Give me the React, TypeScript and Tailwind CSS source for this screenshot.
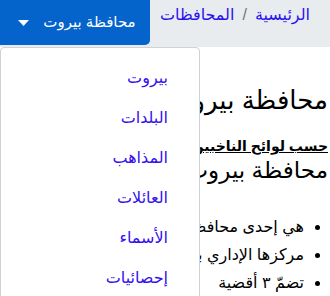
import React from "react";

const font = { fontFamily: '"Liberation Sans", "DejaVu Sans", sans-serif' };

const menuItems = ["بيروت", "البلدات", "المذاهب", "العائلات", "الأسماء", "إحصائيات"];

export default function App() {
  return (
    <div dir="rtl" className="relative h-[296px] w-[330px] overflow-hidden bg-white text-black" style={font}>
      {/* top bar */}
      <div className="flex h-[47px] items-start justify-between bg-[#e9ecef]">
        <nav className="flex items-center gap-2 pr-[20px] pt-[3px] text-[16px] leading-[24px]">
          <a className="text-[#2a12f0]">الرئيسية</a>
          <span className="text-[#6c757d]">/</span>
          <a className="text-[#2a12f0]">المحافظات</a>
        </nav>
        <button className="flex h-[45px] w-[150px] items-center justify-center gap-[14px] rounded-br-[5px] bg-[#0563cc] pl-[4px] text-[15px] text-white">
          <span>محافظة بيروت</span>
          <svg width="11" height="6" viewBox="0 0 11 6">
            <path d="M0 0 L11 0 L5.5 6 Z" fill="white" />
          </svg>
        </button>
      </div>

      {/* content */}
      <div className="pr-[2px] pt-[35px]">
        <h1 className="text-[26px] leading-[36px]">محافظة بيروت</h1>
        <p className="mt-[19px] text-[14px] font-bold leading-[18px] underline">حسب لوائح الناخبين</p>
        <h2 className="text-[23px] leading-[30px]">محافظة بيروت</h2>
        <ul className="mt-[28px] list-disc pr-[24px] text-[16px] leading-[28px]">
          <li>هي إحدى محافظات لبنان</li>
          <li>مركزها الإداري بيروت</li>
          <li>تضمّ ٣ أقضية</li>
        </ul>
      </div>

      {/* dropdown menu */}
      <div className="absolute left-0 top-[47px] h-[260px] w-[200px] rounded-t-[4px] border border-[#cfd2d6] bg-white">
        <ul className="flex flex-col pr-[31px] pt-[16px]">
          {menuItems.map((item) => (
            <li key={item} className="h-[40px] text-[16px] leading-[28px] text-[#3311ee]">
              {item}
            </li>
          ))}
        </ul>
      </div>
    </div>
  );
}
